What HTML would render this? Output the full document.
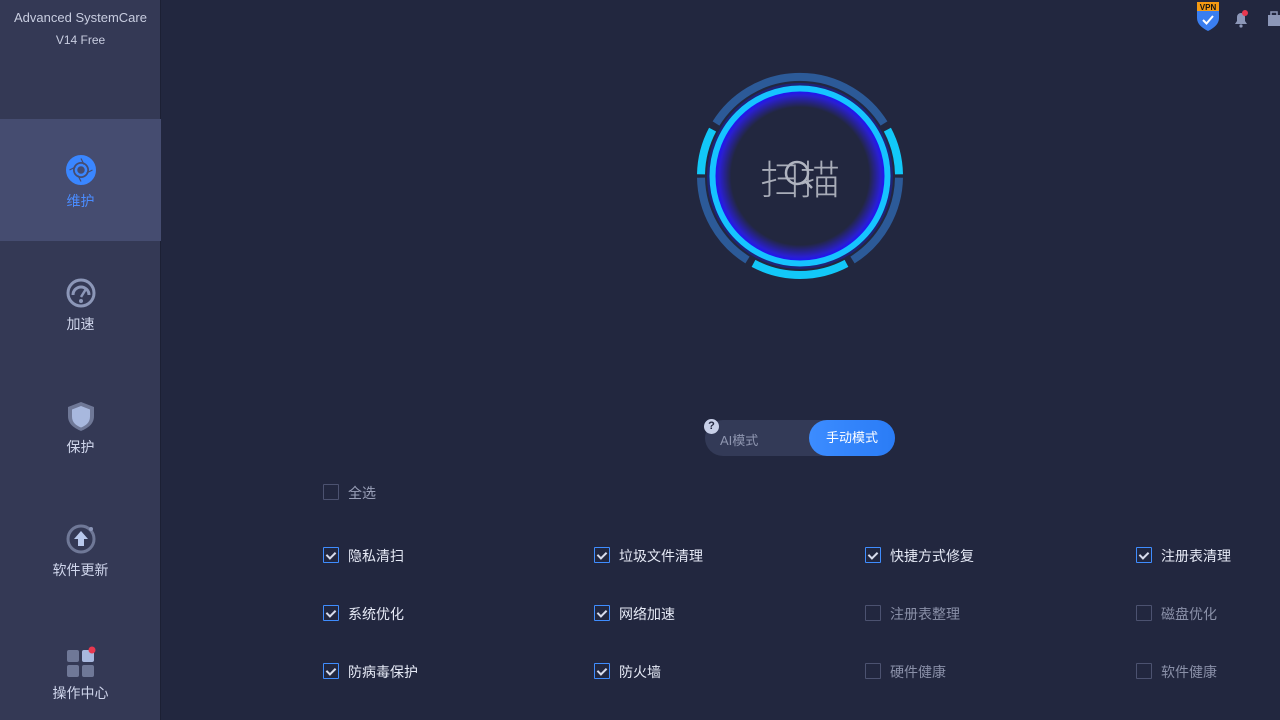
<!DOCTYPE html>
<html><head><meta charset="utf-8"><style>
*{margin:0;padding:0;box-sizing:border-box}
html,body{width:1280px;height:720px;overflow:hidden}
body{background:#22273f;font-family:"Liberation Sans","Noto Sans CJK SC",sans-serif;position:relative}
.side{position:absolute;left:0;top:0;width:161px;height:720px;background:#343955;border-right:1px solid #1c2034}
.t1{position:absolute;top:10px;left:0;width:161px;text-align:center;color:#c8cde0;font-size:13px}
.t2{position:absolute;top:33px;left:0;width:161px;text-align:center;color:#c8cde0;font-size:12px}
.nav{position:absolute;left:0;width:161px;height:122px;text-align:center;color:#d0d6ec;font-size:14px}
.nav.sel{background:#454c70;color:#4a8cff}
.nav svg{position:absolute;left:65px;top:35px}
.nav span{position:absolute;top:72px;left:0;width:161px}
.cb{position:absolute;font-size:14px;color:#e6eaf6}
.cb i{position:absolute;left:0;top:1px;width:16px;height:16px;border:1.5px solid #3f8dff;border-radius:1px}
.cb i.on::after{content:"";position:absolute;left:4px;top:1.5px;width:4px;height:7px;border:solid #d8dcec;border-width:0 2px 2px 0;transform:rotate(45deg)}
.cb i.off{border-color:#4c5270}
.cb.off{color:#8a90a8}
.cb b{font-weight:normal;position:absolute;left:25px;top:0;white-space:nowrap}
</style></head><body>
<div class="side">
<div class="t1">Advanced SystemCare</div>
<div class="t2">V14 Free</div>
<div class="nav sel" style="top:119px"><svg width="32" height="32" viewBox="0 0 32 32"><circle cx="16" cy="16" r="11.5" fill="none" stroke="#3a86ff" stroke-width="7"/><circle cx="16" cy="16" r="5" fill="none" stroke="#3a86ff" stroke-width="2.5"/><path d="M16 4.5l3 6M27.5 16l-6 3M16 27.5l-3-6M4.5 16l6-3" stroke="#454c70" stroke-width="1.2"/></svg><span>维护</span></div>
<div class="nav" style="top:242px"><svg width="32" height="32" viewBox="0 0 32 32"><circle cx="16" cy="16" r="13" fill="none" stroke="#8c97b8" stroke-width="3"/><path d="M8 18a8 8 0 0 1 16 0" fill="none" stroke="#8c97b8" stroke-width="3"/><path d="M16 20l5-8" stroke="#8c97b8" stroke-width="2.5"/><circle cx="16" cy="24" r="2" fill="#8c97b8"/></svg><span>加速</span></div>
<div class="nav" style="top:365px"><svg width="32" height="32" viewBox="0 0 32 32"><path d="M16 2L29 7v9c0 8-6 12-13 15C9 28 3 24 3 16V7z" fill="#6f7897"/><path d="M16 6l9 3.5v7c0 6-4 9-9 11-5-2-9-5-9-11v-7z" fill="#a8b8de"/></svg><span>保护</span></div>
<div class="nav" style="top:488px"><svg width="32" height="32" viewBox="0 0 32 32"><circle cx="16" cy="16" r="13" fill="none" stroke="#6f7897" stroke-width="3"/><circle cx="26" cy="6" r="2" fill="#8c97b8"/><path d="M16 8l-7 8h4v7h6v-7h4z" fill="#b8c8ec"/></svg><span>软件更新</span></div>
<div class="nav" style="top:611px"><svg width="32" height="32" viewBox="0 0 32 32"><rect x="2" y="4" width="12" height="12" rx="2" fill="#6f7897"/><rect x="17" y="4" width="12" height="12" rx="2" fill="#a8b8de"/><rect x="2" y="19" width="12" height="12" rx="2" fill="#6f7897"/><rect x="17" y="19" width="12" height="12" rx="2" fill="#6f7897"/><circle cx="27" cy="4" r="3.5" fill="#e8384f"/></svg><span>操作中心</span></div>
</div>

<svg style="position:absolute;left:0;top:0" width="1280" height="720">
<defs><radialGradient id="g" cx="800" cy="176" r="86" gradientUnits="userSpaceOnUse"><stop offset="0.8" stop-color="#22273f"/><stop offset="0.94" stop-color="#2a1fd0"/><stop offset="1" stop-color="#1d10ff"/></radialGradient></defs>
<circle cx="800" cy="176" r="93" fill="#1e2478"/>
<g fill="none" stroke-width="8">
<path d="M716 123.5A99 99 0 0 1 884 123.5" stroke="#2c5a98"/>
<path d="M899 177.7A99 99 0 0 1 852.5 260" stroke="#2c5a98"/>
<path d="M747.5 260A99 99 0 0 1 701 177.7" stroke="#2c5a98"/>
<path d="M887.4 129.6A99 99 0 0 1 899 174.3" stroke="#12c8f8"/>
<path d="M846.5 263.4A99 99 0 0 1 753.5 263.4" stroke="#12c8f8"/>
<path d="M701 174.3A99 99 0 0 1 712.6 129.6" stroke="#12c8f8"/>
</g>
<circle cx="800" cy="176" r="85" fill="url(#g)"/>
<circle cx="800" cy="176" r="87.5" fill="none" stroke="#16c4ff" stroke-width="6"/>
<text x="800" y="194" text-anchor="middle" font-size="40" fill="#a8acb8" font-family="Noto Sans CJK SC,sans-serif" font-weight="300">扫描</text>
<circle cx="797" cy="173" r="11" fill="none" stroke="#b0b4c0" stroke-width="2.5"/>
<path d="M805 181l7 7" stroke="#b0b4c0" stroke-width="2.5"/>
</svg>

<svg style="position:absolute;left:1196px;top:2px" width="24" height="30" viewBox="0 0 24 30"><path d="M1 0h22v16c0 6-5 10-11 13C6 26 1 22 1 16z" fill="#3a7ef0"/><path d="M1 0h22v9H1z" fill="#f59a12"/><text x="12" y="8" text-anchor="middle" font-size="8" fill="#111" font-family="Liberation Sans" font-weight="bold">VPN</text><path d="M7 18l3.5 3.5L17 14" fill="none" stroke="#fff" stroke-width="2"/></svg>
<svg style="position:absolute;left:1232px;top:10px" width="18" height="18" viewBox="0 0 18 18"><path d="M3 14h12l-2-3V7a4 4 0 0 0-8 0v4z" fill="#8c97b8"/><circle cx="9" cy="16" r="1.6" fill="#8c97b8"/><circle cx="13" cy="3" r="3" fill="#e8384f"/></svg>
<svg style="position:absolute;left:1268px;top:10px" width="12" height="18" viewBox="0 0 12 18"><rect x="0" y="5" width="12" height="11" fill="#8c97b8"/><rect x="3" y="2" width="6" height="4" fill="none" stroke="#8c97b8" stroke-width="1.5"/></svg>

<div style="position:absolute;left:705px;top:420px;width:190px;height:36px;border-radius:18px;background:#333a57"></div>
<div style="position:absolute;left:720px;top:430px;color:#8f96b0;font-size:13px">AI模式</div>
<div style="position:absolute;left:809px;top:420px;width:86px;height:36px;border-radius:18px;background:linear-gradient(90deg,#3c8cff,#2a7cf6);color:#fff;font-size:13px;text-align:center;line-height:36px">手动模式</div>
<div style="position:absolute;left:704px;top:419px;width:15px;height:15px;border-radius:50%;background:#c8d0e8;color:#22273f;font-size:11px;font-weight:bold;text-align:center;line-height:15px">?</div>

<div class="cb off" style="left:323px;top:483px;color:#9aa0b8"><i class="off"></i><b>全选</b></div>

<div class="cb" style="left:323px;top:546px"><i class="on"></i><b>隐私清扫</b></div>
<div class="cb" style="left:594px;top:546px"><i class="on"></i><b>垃圾文件清理</b></div>
<div class="cb" style="left:865px;top:546px"><i class="on"></i><b>快捷方式修复</b></div>
<div class="cb" style="left:1136px;top:546px"><i class="on"></i><b>注册表清理</b></div>
<div class="cb" style="left:323px;top:604px"><i class="on"></i><b>系统优化</b></div>
<div class="cb" style="left:594px;top:604px"><i class="on"></i><b>网络加速</b></div>
<div class="cb off" style="left:865px;top:604px"><i class="off"></i><b>注册表整理</b></div>
<div class="cb off" style="left:1136px;top:604px"><i class="off"></i><b>磁盘优化</b></div>
<div class="cb" style="left:323px;top:662px"><i class="on"></i><b>防病毒保护</b></div>
<div class="cb" style="left:594px;top:662px"><i class="on"></i><b>防火墙</b></div>
<div class="cb off" style="left:865px;top:662px"><i class="off"></i><b>硬件健康</b></div>
<div class="cb off" style="left:1136px;top:662px"><i class="off"></i><b>软件健康</b></div>
</body></html>
